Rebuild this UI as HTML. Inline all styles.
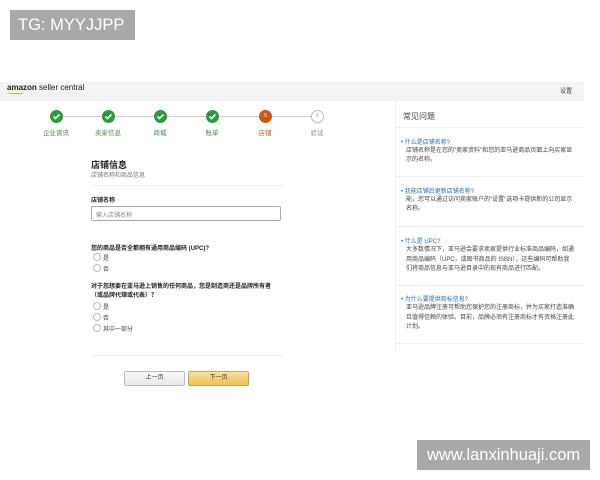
<!DOCTYPE html><html><head><meta charset="utf-8"><style>
*{margin:0;padding:0;box-sizing:border-box}
body{width:600px;height:480px;background:#fff;position:relative;overflow:hidden;font-family:"Liberation Sans","Noto Sans CJK SC",sans-serif;color:#333}
.a{position:absolute;white-space:nowrap}
.wm{background:#a9a9a9;color:#fff;font-size:16.5px;line-height:30px;padding-left:8px}
.c{position:absolute;width:13px;height:13px;border-radius:50%;background:#2a9a3a;top:110px}
.c svg{position:absolute;left:2px;top:2px}
.lab{position:absolute;top:127px;font-size:6.5px;color:#4a8a4a;width:50px;text-align:center}
.s{font-size:6px;color:#444}
.q{font-size:6px;color:#2a6fb5}
.r{position:absolute;width:8px;height:8px;border:1px solid #bbb;border-radius:50%}
.hr{position:absolute;height:1px;background:#eee}
</style></head><body>
<div class="a wm" style="left:10px;top:10px;width:125px;height:30px">TG: MYYJJPP</div>
<div class="a wm" style="left:417px;top:440px;width:173px;height:30px;padding-left:10px">www.lanxinhuaji.com</div>

<div class="a" style="left:0;top:82px;width:584px;height:19px;background:#f3f3f3"></div>
<div class="a" style="left:7px;top:83px;font-size:8px;color:#222"><b>amazon</b> seller central</div>
<div class="a" style="left:8px;top:91px;width:16px;height:3px;border-bottom:1px solid #e8a33c;border-radius:0 0 8px 8px"></div>
<div class="a" style="left:560px;top:86px;font-size:6px;color:#444">设置</div>

<div class="a" style="left:56px;top:116px;width:261px;height:1px;background:#ccc"></div>
<div class="c" style="left:50px"><svg width="9" height="9"><path d="M1.5 4.5l2 2 4-4" stroke="#fff" stroke-width="1.6" fill="none"/></svg></div>
<div class="c" style="left:102px"><svg width="9" height="9"><path d="M1.5 4.5l2 2 4-4" stroke="#fff" stroke-width="1.6" fill="none"/></svg></div>
<div class="c" style="left:154px"><svg width="9" height="9"><path d="M1.5 4.5l2 2 4-4" stroke="#fff" stroke-width="1.6" fill="none"/></svg></div>
<div class="c" style="left:206px"><svg width="9" height="9"><path d="M1.5 4.5l2 2 4-4" stroke="#fff" stroke-width="1.6" fill="none"/></svg></div>
<div class="c" style="left:259px;background:#c9581a;color:#fff;font-size:5px;text-align:center;line-height:13px">5</div>
<div class="c" style="left:311px;background:#fff;border:1px solid #bbb;color:#999;font-size:5px;text-align:center;line-height:11px">6</div>
<div class="lab" style="left:31px">企业资讯</div>
<div class="lab" style="left:83px">卖家信息</div>
<div class="lab" style="left:135px">商城</div>
<div class="lab" style="left:187px">账单</div>
<div class="lab" style="left:240px;color:#c9581a">店铺</div>
<div class="lab" style="left:292px;color:#888">验证</div>

<div class="a" style="left:395px;top:101px;width:1px;height:250px;background:#eee"></div>
<div class="a" style="left:403px;top:111px;font-size:8px;color:#444">常见问题</div>
<div class="hr" style="left:396px;top:127px;width:188px"></div>
<div class="a q" style="left:401px;top:137px">• 什么是店铺名称?</div>
<div class="a s" style="left:406px;top:147px;line-height:9px">店铺名称是在您的"卖家资料"和您的亚马逊商品页面上向买家显<br>示的名称。</div>
<div class="hr" style="left:396px;top:176px;width:188px"></div>
<div class="a q" style="left:401px;top:186px">• 我能店铺后更新店铺名称?</div>
<div class="a s" style="left:406px;top:196px;line-height:9px">能，您可以通过访问卖家账户的"设置"选项卡提供新的公司显示<br>名称。</div>
<div class="hr" style="left:396px;top:226px;width:188px"></div>
<div class="a q" style="left:401px;top:236px">• 什么是 UPC?</div>
<div class="a s" style="left:406px;top:246px;line-height:9.5px">大多数情况下，亚马逊会要求卖家提供行业标准商品编码，如通<br>用商品编码（UPC，或图书商品的 ISBN），这些编码可帮助我<br>们将商品信息与亚马逊目录中的现有商品进行匹配。</div>
<div class="hr" style="left:396px;top:285px;width:188px"></div>
<div class="a q" style="left:401px;top:294px">• 为什么要提供商标信息?</div>
<div class="a s" style="left:406px;top:304px;line-height:9.5px">亚马逊品牌注册可帮助您保护您的注册商标，并为买家打造准确<br>且值得信赖的体验。目前，品牌必须有注册商标才有资格注册此<br>计划。</div>
<div class="hr" style="left:396px;top:343px;width:188px"></div>

<div class="a" style="left:91px;top:158px;font-size:9px;font-weight:bold;color:#222">店铺信息</div>
<div class="a" style="left:91px;top:170px;font-size:6px;color:#777">店铺名称和商品信息</div>
<div class="hr" style="left:91px;top:185px;width:192px"></div>
<div class="a" style="left:91px;top:195px;font-size:6px;font-weight:bold;color:#222">店铺名称</div>
<div class="a" style="left:91px;top:206px;width:190px;height:15px;border:1px solid #aaa;border-radius:2px;font-size:6px;color:#888;padding:3px 4px">输入店铺名称</div>
<div class="a" style="left:91px;top:243px;font-size:6px;font-weight:bold;color:#222">您的商品是否全都拥有通用商品编码 (UPC)?</div>
<div class="r" style="left:93px;top:253px"></div><div class="a s" style="left:103px;top:253px">是</div>
<div class="r" style="left:93px;top:264px"></div><div class="a s" style="left:103px;top:264px">否</div>
<div class="a" style="left:91px;top:283px;font-size:6px;font-weight:bold;color:#222;line-height:9px">对于您想要在亚马逊上销售的任何商品，您是制造商还是品牌所有者<br>（或品牌代理或代表）？</div>
<div class="r" style="left:93px;top:302px"></div><div class="a s" style="left:103px;top:302px">是</div>
<div class="r" style="left:93px;top:313px"></div><div class="a s" style="left:103px;top:313px">否</div>
<div class="r" style="left:93px;top:324px"></div><div class="a s" style="left:103px;top:324px">其中一部分</div>
<div class="hr" style="left:91px;top:355px;width:192px"></div>
<div class="a" style="left:124px;top:371px;width:61px;height:15px;border:1px solid #bbb;border-radius:2px;background:linear-gradient(#f7f8fa,#e7e9ec);font-size:6px;text-align:center;line-height:13px;color:#333">上一页</div>
<div class="a" style="left:188px;top:371px;width:61px;height:15px;border:1px solid #c9a34a;border-radius:2px;background:linear-gradient(#f7dfa5,#f0c14b);font-size:6px;text-align:center;line-height:13px;color:#333">下一页</div>
</body></html>
